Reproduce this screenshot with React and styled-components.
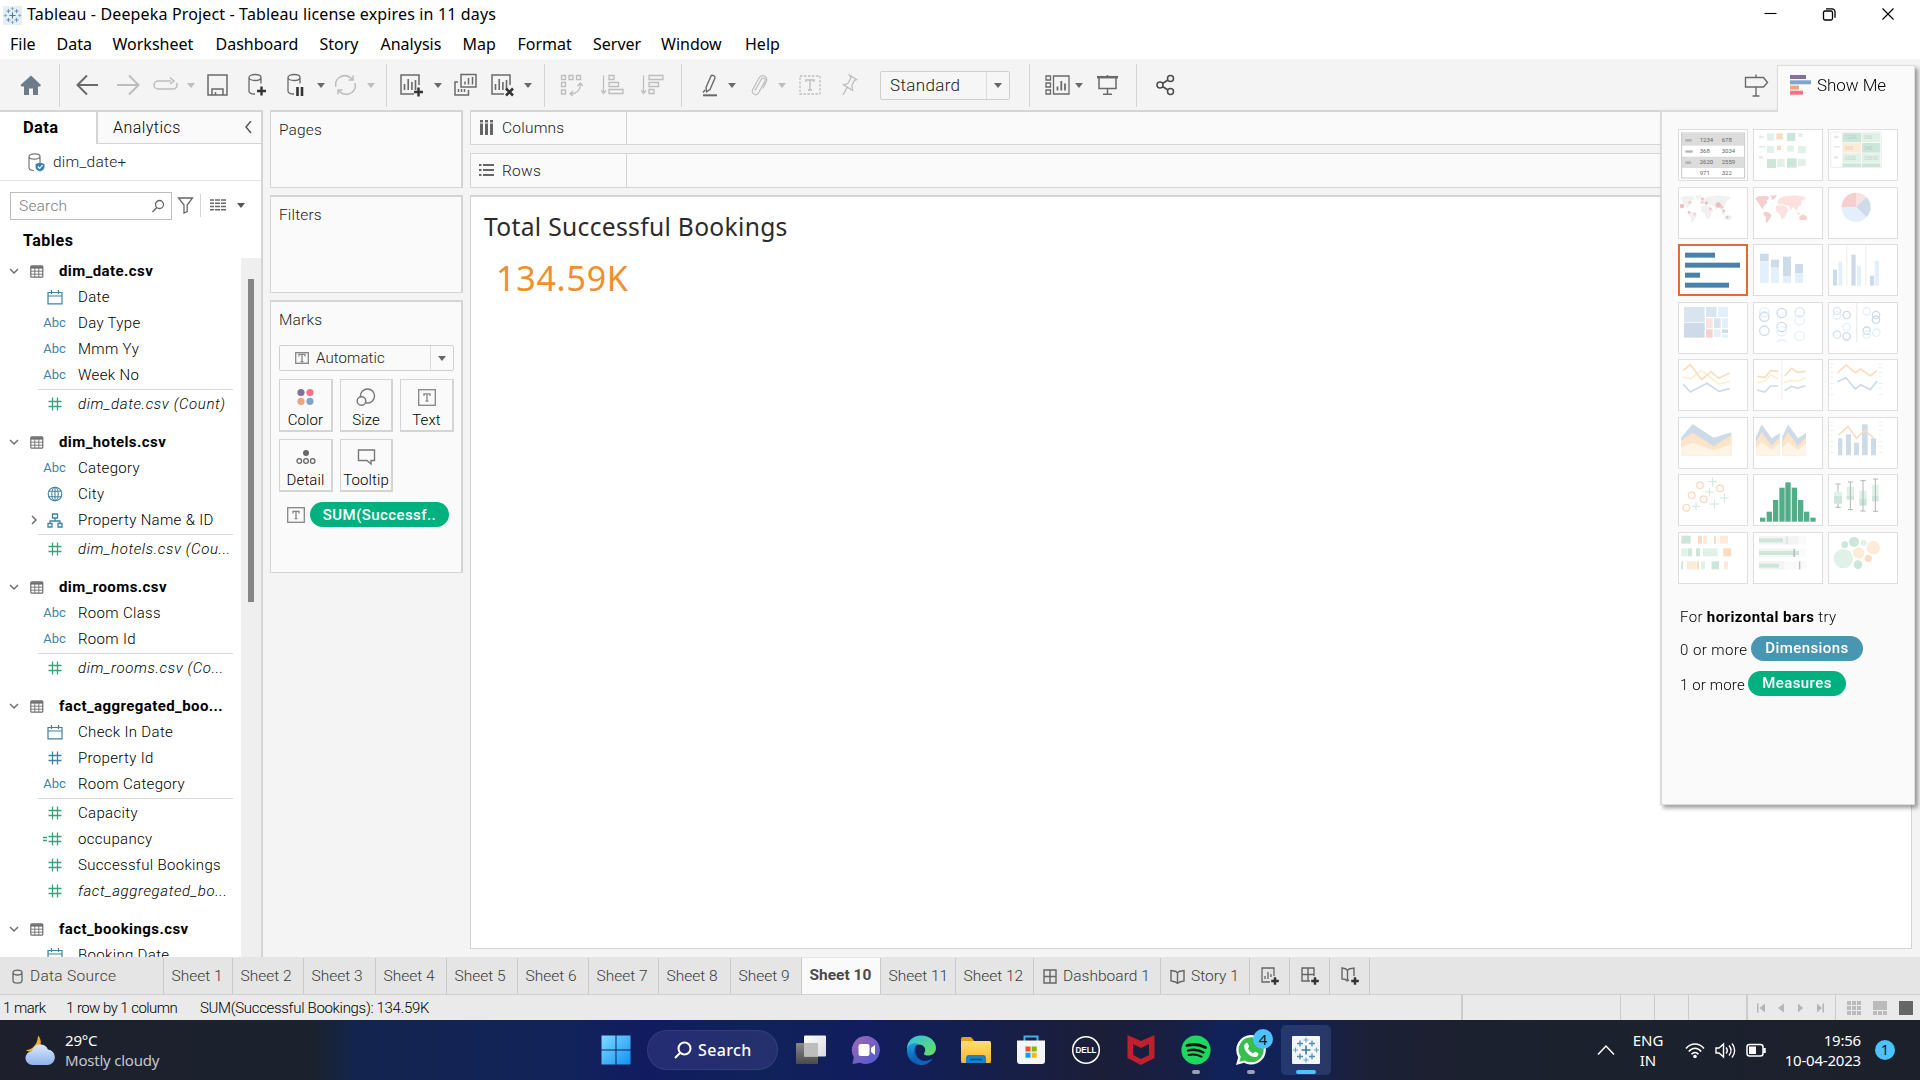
import React from "react";
import styled, { createGlobalStyle } from "styled-components";

const UI = `Roboto, "Liberation Sans", sans-serif`;
const SYS = `"Noto Sans", "Open Sans", sans-serif`;
const LINE = "#d4d4d4";
const BLUE = "#3f83a3";
const GREEN = "#3aa27a";

const Global = createGlobalStyle`
  * { box-sizing: border-box; }
  html, body { margin: 0; padding: 0; }
  body { width: 1920px; height: 1080px; overflow: hidden; font-family: ${UI}; font-weight: 300; color: #111; }
  svg { display: block; flex: none; }
`;

/* ---------- window frame ---------- */
const Window = styled.div`
  position: relative;
  width: 1920px;
  height: 1080px;
  display: flex;
  flex-direction: column;
  background: #f4f4f4;
  overflow: hidden;
`;
const TitleBar = styled.header`
  height: 30px;
  display: flex;
  align-items: center;
  padding: 0 25px 0 3px;
  background: #fff;
  font: 16px/29px ${SYS};
`;
const TitleText = styled.div`
  height: 30px;
  margin-left: 5px;
  flex: 1;
  letter-spacing: 0.15px;
  color: #000;
`;
const WindowControls = styled.div`
  display: flex;
  align-items: center;
  gap: 45px;
`;
const MenuBar = styled.nav`
  height: 29px;
  display: flex;
  padding-left: 10px;
  background: #fff;
  font: 16px/29px ${SYS};
  color: #000;
`;
const MenuItem = styled.div`
  width: ${(p) => p.$w}px;
  white-space: nowrap;
`;

/* ---------- toolbar ---------- */
const Toolbar = styled.div`
  height: 51px;
  flex: none;
  display: flex;
  align-items: flex-start;
  padding-top: 5px;
`;
const Tool = styled.div`
  flex: none;
  width: ${(p) => p.$w}px;
  margin-left: ${(p) => p.$gap}px;
  height: 42px;
  display: flex;
  align-items: center;
  justify-content: center;
  color: ${(p) => (p.$off ? "#bdbdbd" : "#6a6a6a")};
`;
const ToolDivider = styled(Tool)`
  height: 43px;
  background: ${LINE};
`;
const Caret = styled.i`
  display: block;
  width: 0;
  height: 0;
  border-left: 4px solid transparent;
  border-right: 4px solid transparent;
  border-top: 5px solid currentColor;
`;
const FitSelect = styled.div`
  width: 130px;
  height: 29px;
  border: 1.5px solid #cfcfcf;
  border-radius: 2px;
  display: flex;
  align-items: center;
  background: #f6f6f6;
  font-size: 17px;
  color: #222;
  span { flex: 1; padding-left: 9px; letter-spacing: 0.35px; }
`;
const SelectArrow = styled.div`
  width: ${(p) => p.$w}px;
  align-self: stretch;
  border-left: 1px solid #dcdcdc;
  display: flex;
  align-items: center;
  justify-content: center;
  color: #666;
`;

/* ---------- body ---------- */
const Body = styled.div`
  height: 847px;
  flex: none;
  display: flex;
`;
const DataPane = styled.aside`
  width: 263px;
  display: flex;
  flex-direction: column;
  background: #fff;
  border-right: 2px solid ${LINE};
  border-top: 2px solid ${LINE};
  overflow: hidden;
`;
const PaneTabs = styled.div`
  height: 32px;
  flex: none;
  display: flex;
  font-size: 16px;
  line-height: 31px;
`;
const DataTab = styled.div`
  width: 96px;
  padding-left: 23px;
  font-weight: 700;
  font-size: 16.5px;
  letter-spacing: 0.35px;
  color: #000;
`;
const AnalyticsTab = styled.div`
  flex: 1;
  display: flex;
  align-items: center;
  justify-content: space-between;
  padding: 0 9px 0 15px;
  border-left: 2px solid ${LINE};
  border-bottom: 1px solid ${LINE};
  background: #fafafa;
  letter-spacing: 0.45px;
  color: #000;
`;
const SourceRow = styled.div`
  height: 37px;
  flex: none;
  display: flex;
  align-items: center;
  padding-left: 28px;
  border-bottom: 1px solid #e2e2e2;
  font-size: 15.5px;
  letter-spacing: 0.25px;
  color: #222;
  span { margin-left: 8px; }
`;
const SearchRow = styled.div`
  height: 49px;
  flex: none;
  display: flex;
  align-items: center;
  padding-left: 10px;
`;
const SearchBox = styled.div`
  width: 162px;
  height: 28px;
  margin-right: 5px;
  border: 1px solid #bdbdbd;
  display: flex;
  align-items: center;
  justify-content: space-between;
  padding: 0 6px 0 8px;
  font-size: 15.5px;
  letter-spacing: 0.2px;
  color: #7d7d7d;
`;
const SearchSplit = styled.div`
  width: 1px;
  height: 23px;
  margin: 0 9px 0 6px;
  background: ${LINE};
`;
const ListCaret = styled.div`
  margin-left: 10px;
  color: #555;
`;
const TablesTitle = styled.div`
  height: 28px;
  line-height: 21px;
  flex: none;
  padding-left: 23px;
  font-weight: 700;
  font-size: 16px;
  letter-spacing: 0.5px;
  color: #000;
`;
const TreeArea = styled.div`
  flex: 1;
  min-height: 0;
  display: flex;
  overflow: hidden;
`;
const Tree = styled.div`
  width: 241px;
`;
const ScrollTrack = styled.div`
  width: 20px;
  padding: 21px 0 0 7px;
  background: #efefef;
`;
const ScrollThumb = styled.div`
  width: 6px;
  height: 323px;
  background: #858585;
`;
const Group = styled.section`
  margin-bottom: 12px;
`;
const GroupHead = styled.div`
  height: 26px;
  display: flex;
  align-items: center;
  padding-left: 9px;
  font-weight: 700;
  font-size: 15px;
  color: #000;
  span { margin-left: 15px; letter-spacing: 0.42px; }
`;
const GroupIcon = styled.div`
  margin-left: 11px;
`;
const Field = styled.div`
  height: 26px;
  display: flex;
  align-items: center;
  font-size: 15px;
  letter-spacing: ${(p) => (p.$italic ? 0.62 : 0.33)}px;
  color: #000;
  font-style: ${(p) => (p.$italic ? "italic" : "normal")};
`;
const Expander = styled.div`
  width: 39px;
  display: flex;
  justify-content: flex-end;
`;
const FieldIcon = styled.div`
  width: 31px;
  margin-right: 8px;
  display: flex;
  justify-content: center;
  font: 400 13px/26px ${UI};
  letter-spacing: -0.1px;
  color: ${(p) => (p.$green ? GREEN : BLUE)};
`;
const Rule = styled.div`
  height: 1px;
  margin: 1px 8px 1px 38px;
  background: #d9d9d9;
`;

/* ---------- shelves ---------- */
const CardColumn = styled.div`
  width: 193px;
  margin-left: 7px;
  display: flex;
  flex-direction: column;
  gap: 7px;
`;
const Card = styled.section`
  height: ${(p) => p.$h}px;
  padding: 8px 0 0 8px;
  border: 1px solid ${LINE};
  border-width: 2px 2px 1px 1px;
  background: #fafafa;
`;
const CardTitle = styled.div`
  height: ${(p) => p.$h || 20}px;
  line-height: 21px;
  font-size: 15.5px;
  letter-spacing: 0.15px;
  color: #222;
`;
const MarkSelect = styled.div`
  width: 175px;
  height: 26px;
  display: flex;
  align-items: center;
  padding-left: 15px;
  border: 1px solid #cfcfcf;
  border-radius: 2px;
  font-size: 15px;
  letter-spacing: 0.1px;
  color: #222;
  span { flex: 1; margin-left: 7px; }
`;
const MarkGrid = styled.div`
  margin-top: 8px;
  display: grid;
  grid-template-columns: 54px 53px 54px;
  grid-auto-rows: 53px;
  gap: 7px;
`;
const MarkButton = styled.div`
  border: 1px solid ${LINE};
  border-width: 1px 2px 2px 1px;
  display: flex;
  flex-direction: column;
  align-items: center;
  justify-content: flex-end;
  white-space: nowrap;
  font-size: 15px;
  letter-spacing: 0.1px;
  line-height: 18px;
  padding-bottom: 1px;
  color: #000;
  svg { margin-bottom: 5px; }
`;
const PillRow = styled.div`
  margin: 10px 0 0 8px;
  display: flex;
  align-items: center;
  gap: 5px;
`;
const Pill = styled.span`
  width: ${(p) => p.$w}px;
  height: 25px;
  flex: none;
  border-radius: 13px;
  display: inline-flex;
  align-items: center;
  justify-content: center;
  background: ${(p) => p.$bg};
  color: #fff;
  font-size: 15px;
  font-weight: 500;
  letter-spacing: 0.42px;
`;
const Stage = styled.main`
  width: 1442px;
  margin-left: 7px;
  display: flex;
  flex-direction: column;
`;
const Shelf = styled.div`
  height: 35px;
  margin-bottom: ${(p) => p.$mb}px;
  display: flex;
  border: 1px solid ${LINE};
  border-top-width: ${(p) => p.$top}px;
  background: #fafafa;
`;
const ShelfLabel = styled.div`
  width: 156px;
  display: flex;
  align-items: center;
  padding-left: 8px;
  border-right: 1px solid ${LINE};
  font-size: 15.5px;
  letter-spacing: 0.22px;
  color: #222;
  span { margin-left: 8px; }
`;
const Sheet = styled.section`
  height: 754px;
  padding: 14px 0 0 13px;
  border: 1px solid ${LINE};
  border-top-width: 2px;
  background: #fff;
  font-family: ${SYS};
  font-weight: 400;
`;
const SheetTitle = styled.h1`
  margin: 0;
  font-size: 24.6px;
  line-height: 31px;
  font-weight: 400;
  letter-spacing: 0.32px;
  color: #2b2b2b;
`;
const BigNumber = styled.div`
  margin: 14px 0 0 12px;
  font-size: 34px;
  line-height: 44px;
  letter-spacing: 0.75px;
  color: #f28e2b;
`;

/* ---------- show me ---------- */
const ShowMe = styled.aside`
  position: absolute;
  left: 1660px;
  top: 65px;
  width: 255px;
  filter: drop-shadow(3px 3px 2px rgba(0, 0, 0, 0.38));
`;
const ShowMeTab = styled.div`
  height: 47px;
  margin-left: 117px;
  display: flex;
  align-items: center;
  padding: 0 0 8px 12px;
  border: 1px solid #dcdcdc;
  border-bottom: 0;
  background: #fafafa;
  font-size: 17px;
  letter-spacing: -0.05px;
  color: #000;
  span { margin-left: 6px; }
`;
const ShowMeBody = styled.div`
  height: 693px;
  padding: 17px 0 0 16px;
  border: solid #dcdcdc;
  border-width: 0 1px 1px 2px;
  background: #fafafa;
`;
const TopEdge = styled.div`
  width: 117px;
  height: 2px;
  margin-top: -2px;
  background: #dcdcdc;
`;
const TileGrid = styled.div`
  display: grid;
  grid-template-columns: repeat(3, 70px);
  grid-auto-rows: 52px;
  gap: 5.5px 5px;
`;
const Tile = styled.div`
  background: #fff;
  box-shadow: inset 0 0 0 ${(p) => (p.$on ? "2px #df6b35" : "1px #dedede")};
`;
const HintBlock = styled.div`
  margin-top: 20px;
`;
const Hint = styled.div`
  height: ${(p) => p.$h}px;
  margin: ${(p) => p.$mt || 0}px 0 0 2px;
  display: flex;
  align-items: center;
  font-size: 15px;
  letter-spacing: ${(p) => p.$ls ?? 0.35}px;
  color: #000;
  b { font-weight: 700; letter-spacing: 0.42px; }
  ${Pill} { margin-bottom: 4px; }
`;
const HintText = styled.span`
  width: ${(p) => p.$w}px;
  white-space: nowrap;
`;

/* ---------- bottom ---------- */
const SheetTabs = styled.div`
  height: 38px;
  flex: none;
  display: flex;
  border-bottom: 1px solid #cfcfcf;
  background: #e5e5e5;
`;
const SheetTab = styled.div`
  width: ${(p) => p.$w}px;
  height: 36px;
  margin-top: 1px;
  flex: none;
  display: flex;
  align-items: center;
  padding-left: ${(p) => p.$pl || 7.5}px;
  padding-bottom: ${(p) => (p.$on ? 2 : 0)}px;
  border-right: 1px solid #c9c9c9;
  background: ${(p) => (p.$on ? "#fafafa" : "transparent")};
  font-size: 15.5px;
  font-weight: ${(p) => (p.$on ? 700 : 300)};
  letter-spacing: ${(p) => p.$ls ?? 0}px;
  white-space: nowrap;
  color: ${(p) => (p.$on ? "#4a4a4a" : "#3a3a3a")};
  svg { color: #666; }
  span { margin-left: 6px; }
`;
const StatusBar = styled.div`
  height: 25px;
  flex: none;
  display: flex;
  background: #eaeaea;
  font-size: 15px;
  line-height: 26px;
  color: #000;
`;
const StatusText = styled.div`
  width: ${(p) => p.$w}px;
  white-space: nowrap;
  letter-spacing: ${(p) => p.$ls || 0}px;
`;
const StatusCell = styled.div`
  width: ${(p) => p.$w}px;
  display: flex;
  align-items: center;
  border-left: ${(p) => p.$b || 1}px solid #cbcbcb;
`;
const Taskbar = styled.footer`
  height: 60px;
  flex: none;
  display: flex;
  align-items: center;
  color: #fff;
  font-family: ${SYS};
  font-weight: 400;
  background: linear-gradient(90deg, #1d202c 0, #1b222e 310px, #13244e 355px, #12235a 560px, #111c60 650px, #10225a 760px, #111d5e 860px, #141f50 960px, #1c1e38 1100px, #171f44 1180px, #11225a 1220px, #122155 1300px, #1c2038 1360px, #1c2030 1440px, #1b222e 1560px, #1c202b 1920px);
`;
const Weather = styled.div`
  width: 576px;
  padding-left: 25px;
  display: flex;
  align-items: center;
  font-size: 15px;
  line-height: 20px;
  span { display: block; color: #c3c8cf; letter-spacing: -0.22px; }
`;
const WeatherText = styled.div`
  margin-left: 9px;
  letter-spacing: -0.2px;
`;
const StartButton = styled.div`
  width: 56px;
  padding-left: 25px;
`;
const SearchPill = styled.div`
  width: 131px;
  height: 40px;
  margin: 0 8px 0 15px;
  display: flex;
  align-items: center;
  padding: 0 0 0 26px;
  gap: 6px;
  border-radius: 20px;
  border: 1px solid rgba(255, 255, 255, 0.07);
  background: rgba(120, 110, 190, 0.2);
  font-size: 16px;
  font-weight: 500;
  letter-spacing: 0.35px;
`;
const Apps = styled.div`
  display: flex;
  gap: 5px;
`;
const AppSlot = styled.div`
  position: relative;
  width: 50px;
  height: 50px;
  display: flex;
  align-items: center;
  justify-content: center;
  border-radius: 5px;
  background: ${(p) => (p.$on ? "rgba(120,150,220,0.2)" : "transparent")};
  &::after {
    content: "";
    position: absolute;
    left: 50%;
    bottom: 1px;
    height: 4px;
    width: ${(p) => p.$mark || 0}px;
    transform: translateX(-50%);
    border-radius: 2px;
    background: ${(p) => (p.$on ? "#4cc2ff" : "#9ba0b5")};
  }
`;
const Badge = styled.span`
  position: absolute;
  top: 4px;
  right: 3px;
  width: 20px;
  height: 20px;
  border-radius: 50%;
  background: #4cc2ff;
  color: #08111c;
  font-size: 15px;
  line-height: 20px;
  text-align: center;
`;
const Tray = styled.div`
  flex: 1;
  display: flex;
  align-items: center;
  justify-content: flex-end;
  padding-right: 25px;
  font-size: 15px;
  line-height: 20px;
`;
const Lang = styled.div`
  width: 50px;
  margin: 0 12px 0 8px;
  text-align: center;
`;
const TrayIcons = styled.div`
  display: flex;
  gap: 10px;
`;
const Clock = styled.div`
  width: 95px;
  text-align: right;
  letter-spacing: -0.2px;
`;
const Notice = styled.div`
  width: 20px;
  height: 20px;
  margin-left: 14px;
  border-radius: 50%;
  background: #4cc2ff;
  color: #08111c;
  font-size: 14px;
  line-height: 20px;
  text-align: center;
`;

/* ---------- small icons ---------- */
const Svg = ({ w, h, children, vb, ...r }) => (
  <svg width={w} height={h} viewBox={vb || `0 0 ${w} ${h}`} fill="none" stroke="currentColor" strokeWidth="1.5" {...r}>
    {children}
  </svg>
);
const Bars = ({ x = 0, y = 0 }) => <path d={`M${x} ${y}v-6M${x + 3.7} ${y}v-11M${x + 7.4} ${y}v-8M${x + 11} ${y}v-10`} strokeWidth="1.6" />;
const Plus = ({ x, y, s = 3.8 }) => <path d={`M${x - s} ${y}h${2 * s}M${x} ${y - s}v${2 * s}`} stroke="#333" strokeWidth="2.4" />;
const TBox = ({ w = 18, h = 16 }) => (
  <Svg w={w} h={h} stroke="#858585" strokeWidth="1.3">
    <rect x=".7" y=".7" width={w - 1.4} height={h - 1.4} />
    <path d={`M${w / 2 - 3} ${h / 2 - 1.6}v-2h6v2M${w / 2} ${h / 2 - 3.6}v7.2m-1.5 0h3`} />
  </Svg>
);
const Chevron = ({ right }) => (
  <Svg w={10} h={10} stroke="#707070" strokeWidth="1.5">
    <path d={right ? "M3 1l4 4-4 4" : "M1 3l4 4 4-4"} />
  </Svg>
);
const TableIcon = () => (
  <Svg w={14} h={13} stroke="#6e6e6e" strokeWidth="1.2">
    <rect x=".8" y=".8" width="12" height="11.4" rx="1" />
    <path d="M1 2.4h12" strokeWidth="2.4" />
    <path d="M1 6.2h12M1 9.2h12M4.8 3v9M8.8 3v9" strokeWidth=".9" />
  </Svg>
);
const DateIcon = () => (
  <Svg w={16} h={15} strokeWidth="1.2">
    <path d="M1 2.5h14v11.3H1zM1 6h14M4.5 0v4M11.5 0v4" />
  </Svg>
);
const Hash = ({ calc }) => (
  <Svg w={24} h={14} strokeWidth="1.3">
    <path d="M5.500 4.5h13M5.500 9.5h13M9.500 .5v13M14.500 .5v13" />
    {calc && <path d="M0 5.500h4M0 8.500h4" strokeWidth="1.4" />}
  </Svg>
);
const Globe = () => (
  <Svg w={16} h={16} strokeWidth="1.1">
    <circle cx="8" cy="8" r="6.8" />
    <ellipse cx="8" cy="8" rx="3.2" ry="6.8" />
    <path d="M8 1v14M1.5 5.3h13M1.5 10.7h13" />
  </Svg>
);
const Hier = () => (
  <Svg w={16} h={15} strokeWidth="1.3">
    <path d="M5.5 1h5v4h-5zM1 10.5h4V14H1zM11 10.5h4V14h-4zM8 5v3M3 10.5V8h10v2.500" />
  </Svg>
);
const ICONS = {
  date: <DateIcon />, abc: "Abc", hash: <Hash />, calc: <Hash calc />, globe: <Globe />, hier: <Hier />,
};

/* ---------- toolbar drawings ---------- */
const Cyl = ({ x = 2 }) => (
  <path d={`M${x} 4.500v13.500c0 2 2 3 6 3M${x} 4.500c0-4 12-4 12 0s-12 4-12 0M${x + 12} 4.500v6`} strokeWidth="1.3" />
);
const TOOL_ART = {
  home: <path d="M11 2.500L21 12l-1 1.500h-2V22h-5v-6.500H9V22H4v-8.500H1.500L.5 12z" fill="#6b7b8c" stroke="none" />,
  back: <path d="M22 12H2M11 2.500L1.500 12 11 21.500" strokeWidth="2" />,
  fwd: <path d="M1 12h21M13 2.500L22.500 12 13 21.500" strokeWidth="2" />,
  redo: <path d="M18 8H5a4 4 0 000 8h15a4 4 0 003.500-6M17 4.500L21 8l-4 3" />,
  save: <path d="M1 2h19v20H1zM5 22v-6h11v6M8.500 22v-3" />,
  dbplus: <><Cyl /><Plus x={14.500} y={18} s={4.500} /></>,
  dbpause: <><Cyl x={1} /><path d="M10.500 14v9M15 14v9" stroke="#333" strokeWidth="2.600" /></>,
  refresh: <path d="M2 14C0 6 8 0 15.500 4l3 2.500M21 10c2 8-6 14-13.500 10l-3-2.500M14.500 7h4.500V2.500M8.500 17H4v4.500" />,
  newsheet: <><path d="M19 12V2H1v19h13" /><Bars x={4.500} y={17} /><Plus x={18.500} y={19} s={4.500} /></>,
  dup: <><path d="M7 1.500h15v12.500H7zM4 9H1v13h13.500v-5" /><path d="M11 11.500v-3M14.500 11.500V5M18.500 11.500V4M4.500 19v-3M7.500 19v-3M10.500 19v-3" /></>,
  clear: <><path d="M19 12V2H1v19h12" /><Bars x={4.500} y={17} /><path d="M15 15.500l7 7M22 15.500l-7 7" stroke="#333" strokeWidth="2.600" /></>,
  swap: <path d="M1.500 2.500h4v4h-4zM9 2.500h4v4H9zM16.500 2.500h4v4h-4zM1.500 9.500h4v4h-4zM1.500 17h4v4h-4zM20.500 10.500c0 6-3 10-10 10.500M17.500 13l3-3 2.500 3M13 18l-3 3 3 2" strokeWidth="1.300" />,
  sort1: <path d="M2.500 2.500v18M0 17.500l2.500 3 2.500-3M8 2.500h5v4H8zM8 9.500h9.500v4H8zM8 16.500h14v4H8z" strokeWidth="1.300" />,
  sort2: <path d="M2.500 2.500v18M0 17.500l2.500 3 2.500-3M8 2.500h14v4H8zM8 9.500h9.500v4H8zM8 16.500h5v4H8z" strokeWidth="1.300" />,
  pen: <><path d="M4 14.500L9 3c1-1.500 4.500 0 4 2L8 16.500l-3.500 2.200zM1 19.500L3 17" strokeWidth="1.400" /><path d="M1 22.300h14" strokeWidth="2" /></>,
  clip: <path d="M5 17.500L11.500 6c1.500-2 4.500-.5 3.500 2L8.500 20c-2 3.500-7.500 1-6-3L9 5c2.500-4.500 9-2 7.500 3L13 15.500" strokeWidth="1.200" />,
  tbox: <><rect x="1" y="3" width="20" height="18" strokeDasharray="2.500 1.500" strokeWidth="1.300" /><path d="M7 9V7h8v2M11 7v10m-2 0h4" strokeWidth="1.300" /></>,
  pin: <path d="M8.500 2l7 4.500-2 .8-2.500 5 .5 5-9-5.500 4.500-1.500 3-5.300zM6 14.500L2 22" strokeWidth="1.300" />,
  cards: <><path d="M1 3h4.500v4H1zM1 10h4.500v4H1zM1 17h4.500v4H1zM8.500 3H24v18H8.500z" strokeWidth="1.300" /><path d="M12.500 17.500v-4M16.300 17.500V8M20 17.500v-7" strokeWidth="1.800" /></>,
  pres: <><path d="M1 4.200h21" strokeWidth="2.500" /><path d="M3 5v10.500h17V5M11.500 2v2M11.500 15.500V21M7 21.300h9" /></>,
  share: <g stroke="#4a4a4a"><circle cx="4" cy="12" r="3" /><circle cx="14.500" cy="5.500" r="3" /><circle cx="14.500" cy="18.500" r="3" /><path d="M6.500 10.500L12 7M6.500 13.500L12 17" /></g>,
  sign: <path d="M1.500 4.500h18l4 5-4 4.500h-18zM12 1.500v3M12 14v9M8.500 23h7" strokeWidth="1.400" />,
};
const TOOLS = [
  ["home", 20, 22], ["|", 59, 1], ["back", 76, 23], ["fwd", 116, 24, 1], ["redo", 153, 25, 1], ["v", 187, 8, 1],
  ["save", 207, 21], ["dbplus", 247, 20], ["dbpause", 287, 17], ["v", 317, 8], ["refresh", 334, 23, 1], ["v", 367, 8, 1],
  ["|", 386, 1], ["newsheet", 400, 24], ["v", 434, 8], ["dup", 454, 23], ["clear", 491, 23], ["v", 524, 8], ["|", 544, 1],
  ["swap", 560, 23, 1], ["sort1", 601, 23, 1], ["sort2", 641, 23, 1], ["|", 681, 1], ["pen", 702, 16], ["v", 728, 8],
  ["clip", 750, 18, 1], ["v", 778, 8, 1], ["tbox", 799, 22, 1], ["pin", 841, 17, 1], ["select", 880, 130], ["|", 1029, 1],
  ["cards", 1045, 25], ["v", 1075, 8], ["pres", 1096, 23], ["|", 1136, 1], ["share", 1156, 19], ["sign", 1744, 25],
];
const ToolStrip = () => (
  <Toolbar>
    {TOOLS.map(([kind, x, w, off], i) => {
      const gap = i ? x - TOOLS[i - 1][1] - TOOLS[i - 1][2] : x;
      if (kind === "|") return <ToolDivider key={i} $w={w} $gap={gap} />;
      return (
        <Tool key={i} $w={w} $gap={gap} $off={off}>
          {kind === "v" && <Caret />}
          {kind === "select" && <FitSelect><span>Standard</span><SelectArrow $w={23}><Caret /></SelectArrow></FitSelect>}
          {TOOL_ART[kind] && <Svg w={w} h={24}>{TOOL_ART[kind]}</Svg>}
        </Tool>
      );
    })}
  </Toolbar>
);

/* ---------- chart type thumbnails, drawn on a 210 x 156 grid ---------- */
const gl = "#e0f2e7", gm = "#cde6da", ol = "#fdebd8", om = "#fbdcc0", bd = "#cddbe8", bl = "#e3f0fb", bm = "#d8e5f1", pk = "#fde0e0", pd = "#f4cfcd", yl = "#fdf0d2";
const R = ({ d }) => d.map(([x, y, w, h, f], i) => <rect key={i} x={x} y={y} width={w} height={h} fill={f} />);
const C = ({ d }) => d.map(([x, y, r, f], i) => <circle key={i} cx={x} cy={y} r={r} fill={f} />);
const O = ({ d, r }) => d.map(([x, y, c], i) => <circle key={i} cx={x} cy={y} r={r} fill="none" stroke={c} strokeWidth="4" />);
const L = ({ d }) => d.map(([p, c], i) => <polyline key={i} points={p} fill="none" stroke={c} strokeWidth="5" />);
const P = ({ d }) => d.map(([p, c], i) => <polygon key={i} points={p} fill={c} />);
const Cell = ({ x, y, f = "#666", s = 18, children }) => <text x={x} y={y} fill={f} fontSize={s} fontWeight="400" fontFamily="Roboto, sans-serif">{children}</text>;
const World = ({ a, b }) => (
  <g>
    <path fill={a} d="M6 34l10-6 20-1 12 2-2 8-6 4 3 6-8 8-6 8 6 6-6-2-10-14-6-10z M52 26l20-2-6 10-8 6z M34 74l12 2 10 8-4 10-10 14-4-4 1-12-8-10z M138 90l10-8 12 6 2 8-8 4-14-2z" />
    <path fill={b} d="M74 42l8-10 14-4 30-3 30 4 2 6-12 6-2 12-8 6-6 12-6-8-6-2-4 10-6-14-10-2-12-4-10 2z M68 58l14-4 16 4 8 10-6 12-6 14-8 2-6-16-10-6z M128 74l10 4 6 4-8 2z" />
  </g>
);
const ticks = (x) => [19, 29, 45, 58, 77, 92, 111].map((y, i) => [x, y - 5, i % 2 ? 8 : 11, 2, "#e6e6e6"]);
const TILES = [
  <>
    <rect x="11" y="12" width="189" height="135" fill="#fff" stroke="#c6c6c6" strokeWidth="3" />
    <R d={[[12, 13, 187, 37, "#dcdcdc"], [12, 83, 187, 34, "#dcdcdc"], [22, 30, 19, 8, "#b5b5b5"], [22, 64, 22, 7, "#b5b5b5"], [22, 97, 17, 8, "#b5b5b5"]]} />
    <Cell x={65} y={39}>1234</Cell><Cell x={131} y={39}>678</Cell><Cell x={65} y={73}>368</Cell><Cell x={131} y={73}>3034</Cell>
    <Cell x={65} y={106}>2620</Cell><Cell x={131} y={106}>2559</Cell><Cell x={65} y={137}>971</Cell><Cell x={131} y={137}>322</Cell>
  </>,
  <R d={[[18, 20, 14, 8, "#e9e9e9"], [18, 51, 19, 5, "#e9e9e9"], [18, 81, 12, 8, "#e9e9e9"], [42, 13, 21, 22, gl], [70, 13, 20, 18, om], [102, 12, 25, 24, gm], [136, 12, 12, 12, gl], [42, 51, 21, 21, gl], [72, 50, 12, 13, om], [103, 50, 19, 18, gl], [135, 51, 23, 22, gl], [42, 90, 27, 27, gm], [72, 90, 23, 24, gl], [102, 88, 29, 28, gm], [135, 90, 23, 21, gl]]} />,
  <>
    <rect x="8" y="9" width="152" height="106" fill="#fff" stroke="#eee" strokeWidth="3" />
    <R d={[[18, 20, 14, 8, "#e9e9e9"], [18, 51, 19, 5, "#e9e9e9"], [18, 81, 12, 8, "#e9e9e9"], [43, 12, 57, 28, gm], [102, 12, 55, 28, gl], [43, 42, 57, 29, ol], [102, 42, 55, 29, gm], [43, 73, 57, 28, gl], [102, 73, 55, 28, gl], [43, 103, 57, 11, gm], [102, 103, 55, 11, gm]]} />
    <Cell x={50} y={31} f="#b9cfc3" s={15}>1234</Cell><Cell x={108} y={31} f="#bcd4c7" s={15}>545</Cell><Cell x={50} y={62} f="#e2cdb9" s={15}>368</Cell>
    <Cell x={108} y={62} f="#b4ccbf" s={15}>340</Cell><Cell x={50} y={92} f="#bcd4c7" s={15}>2620</Cell><Cell x={108} y={92} f="#bcd4c7" s={15}>33890</Cell>
  </>,
  <><World a="#f1f1f1" b="#f1f1f1" /><C d={[[12, 57, 7, "#e9bfc4"], [35, 46, 5, "#f6cfcf"], [73, 36, 5, "#f2c6c8"], [85, 48, 5, "#e9bfc4"], [72, 46, 5, "#f8d5d5"], [121, 54, 8, "#e9bfc4"], [132, 60, 5, "#f2c6c8"], [137, 72, 5, "#f2c6c8"], [97, 66, 4, "#f2c6c8"], [33, 76, 4, "#e9bfc4"], [50, 81, 5, "#f8d5d5"], [148, 91, 4, "#e9bfc4"]]} /></>,
  <World a={pd} b={pk} />,
  <>
    <path d="M84 60V17A43 43 0 0041 62z" fill={pd} /><path d="M84 60V17A43 43 0 01115 30z" fill={pk} />
    <path d="M84 60L115 30A43 43 0 01115 91z" fill={bd} /><path d="M84 60L115 91A43 43 0 0141 62z" fill={bl} />
  </>,
  <R d={[[21, 26, 90, 15, "#4a81ab"], [21, 56, 165, 15, "#4a81ab"], [21, 86, 45, 15, "#4a81ab"], [21, 116, 132, 15, "#4a81ab"]]} />,
  <R d={[[21, 29, 26, 23, bd], [21, 52, 26, 65, bl], [54, 47, 24, 24, bd], [54, 71, 24, 46, bl], [90, 38, 24, 59, bd], [90, 97, 24, 20, bl], [126, 60, 24, 28, bd], [126, 88, 24, 29, bl]]} />,
  <R d={[[15, 77, 12, 48, bd], [31, 53, 12, 72, bl], [55, 4, 3, 120, "#ededed"], [70, 32, 13, 93, bd], [87, 66, 12, 59, bl], [112, 4, 3, 120, "#ededed"], [126, 95, 12, 30, bd], [140, 50, 13, 75, bl]]} />,
  <R d={[[18, 15, 62, 45, bm], [18, 62, 62, 45, bd], [84, 15, 32, 30, bm], [120, 15, 30, 30, bl], [84, 49, 20, 29, pk], [108, 49, 20, 29, bm], [132, 49, 18, 29, bl], [84, 82, 20, 25, pd], [108, 82, 20, 23, bl], [132, 82, 18, 11, bd], [132, 97, 18, 10, bl]]} />,
  <><O r={14} d={[[34, 31, bl], [34, 44, bd], [34, 86, bd], [86, 33, bd], [86, 75, bd], [86, 88, bl], [140, 31, bm], [140, 55, bl], [140, 102, bl]]} /><path d="M73 122a14 12 0 0127 0" fill="none" stroke={bl} strokeWidth="4" /></>,
  <><O r={11} d={[[27, 27, bm], [27, 40, bl], [56, 39, bd], [56, 75, bl], [27, 98, bm], [56, 103, bd], [116, 28, bl], [144, 39, bd], [144, 53, bd], [116, 86, bd], [116, 98, bl], [145, 92, bl]]} /><R d={[[85, 2, 3, 120, "#e6e6e6"]]} /></>,
  <L d={[["16,54 38,60 70,34 122,75 155,67", yl], ["16,34 37,17 71,62 99,38 122,58 155,42", om], ["16,76 37,99 87,73 123,97 155,89", bd]]} />,
  <><R d={[[85, 4, 3, 120, "#ececec"]]} /><L d={[["12,71 35,67 53,47 75,60", yl], ["12,52 35,56 53,35 75,37", om], ["12,93 35,99 53,81 75,81", bd], ["93,71 116,64 135,67 157,56", yl], ["95,51 116,28 133,40 157,37", om], ["95,95 115,82 133,88 157,80", bd]]} /></>,
  <><R d={[...ticks(6), ...ticks(152)]} /><L d={[["28,42 54,18 82,41 98,30 127,51 147,34", om], ["28,68 54,56 82,90 98,77 127,92 147,66", bd]]} /></>,
  <P d={[["9,62 44,21 107,62 160,46 160,115 9,115", bd], ["9,71 44,47 107,88 160,55 160,115 9,115", "#fde4c8"], ["9,90 44,77 107,100 160,83 160,115 9,115", "#fef4e6"]]} />,
  <P d={[0, 79].flatMap((o) => [[`${9 + o},60 ${26 + o},22 ${56 + o},64 ${80 + o},48 ${80 + o},115 ${9 + o},115`, bd], [`${9 + o},75 ${26 + o},46 ${56 + o},87 ${80 + o},59 ${80 + o},115 ${9 + o},115`, "#fde4c8"], [`${9 + o},92 ${26 + o},76 ${56 + o},98 ${80 + o},78 ${80 + o},115 ${9 + o},115`, "#fef4e6"]])} />,
  <><R d={[...ticks(6), ...ticks(152), [30, 64, 13, 51, bd], [54, 52, 15, 63, bd], [78, 77, 15, 38, bd], [102, 22, 17, 93, bd], [129, 64, 15, 51, bd]]} /><L d={[["32,54 60,28 85,64 110,40 136,62", om]]} /></>,
  <><O r={10} d={[[66, 34, om], [41, 64, om], [77, 76, om], [126, 43, om], [25, 101, om]]} /><path d="M91 23h26M104 10v28M81 54h26M94 41v26M95 90h28M109 77v27M126 72h26M139 59v28M42 97h24M54 85v24" stroke={gm} strokeWidth="3" /></>,
  <R d={[[21, 131], [41, 113], [60, 78], [79, 41], [97, 25], [116, 41], [135, 78], [153, 113], [172, 131]].map(([x, y]) => [x, y, 16, 143 - y, "#54ad89"])} />,
  <>
    <R d={[[18, 53, 24, 12, gl], [18, 65, 24, 24, gm], [56, 38, 22, 27, gl], [56, 65, 22, 12, gm], [94, 50, 22, 24, gl], [94, 74, 22, 21, gm], [132, 32, 20, 33, gl], [132, 65, 20, 17, gm]]} />
    <path d="M30 30v23M30 89v11M22 30h16M22 100h16M67 24v83M60 24h15M60 107h15M105 20v91M97 20h16M97 111h16M142 15v97M135 15h15M135 112h15" stroke="#b5b5b5" strokeWidth="3" />
  </>,
  <R d={[[10, 11, 28, gm], [60, 11, 12, om], [75, 11, 13, ol], [108, 11, 6, om], [126, 11, 24, ol], [10, 49, 19, gl], [30, 49, 12, gm], [54, 49, 12, gm], [75, 49, 44, gl], [136, 49, 24, om], [10, 88, 5, gm], [27, 88, 27, ol], [56, 88, 7, om], [69, 88, 12, gl], [101, 88, 22, gm], [138, 88, 12, ol]].map(([x, y, w, f]) => [x, y, w, 24, f])} />,
  <R d={[[18, 13, 142, 24, "#fafafa"], [18, 50, 142, 24, "#fafafa"], [18, 88, 142, 24, "#fafafa"], [18, 13, 118, 24, "#f4f4f4"], [18, 50, 118, 24, "#f4f4f4"], [18, 88, 75, 24, "#f4f4f4"], [18, 19, 72, 12, gm], [18, 57, 120, 12, gm], [18, 95, 60, 12, gm], [98, 13, 7, 24, "#e6e6e6"], [121, 51, 5, 24, "#bdbdbd"], [138, 88, 4, 24, "#bdbdbd"]]} />,
  <C d={[[46, 80, 29, gl], [78, 30, 15, gm], [50, 38, 10, gm], [107, 33, 9, gl], [136, 47, 20, ol], [92, 63, 17, ol], [121, 79, 11, om], [90, 98, 13, gm]]} />,
];

/* ---------- data ---------- */
const MENUS = [["File", 46.5], ["Data", 56], ["Worksheet", 103], ["Dashboard", 104], ["Story", 61], ["Analysis", 82], ["Map", 55], ["Format", 75.5], ["Server", 68], ["Window", 84], ["Help", 60]];
const TREE = [
  { name: "dim_date.csv", items: [["date", "Date"], ["abc", "Day Type"], ["abc", "Mmm Yy"], ["abc", "Week No"]], measures: [["hash", "dim_date.csv (Count)", 1]] },
  { name: "dim_hotels.csv", items: [["abc", "Category"], ["globe", "City"], ["hier", "Property Name & ID"]], measures: [["hash", "dim_hotels.csv (Cou...", 1]] },
  { name: "dim_rooms.csv", items: [["abc", "Room Class"], ["abc", "Room Id"]], measures: [["hash", "dim_rooms.csv (Co...", 1]] },
  { name: "fact_aggregated_boo...", items: [["date", "Check In Date"], ["hash", "Property Id"], ["abc", "Room Category"]], measures: [["hash", "Capacity"], ["calc", "occupancy"], ["hash", "Successful Bookings"], ["hash", "fact_aggregated_bo...", 1]] },
  { name: "fact_bookings.csv", items: [["date", "Booking Date"]], measures: [] },
];
const FieldRow = ({ icon, text, italic, green }) => (
  <Field $italic={italic}>
    <Expander>{icon === "hier" && <Chevron right />}</Expander>
    <FieldIcon $green={green}>{ICONS[icon]}</FieldIcon>
    {text}
  </Field>
);
const DashIcon = () => <Svg w={14} h={15} strokeWidth="1.4"><path d="M1 1h12v13H1zM7 1v13M1 7.500h12" /></Svg>;
const BookIcon = () => <Svg w={15} h={15} strokeWidth="1.4"><path d="M1 1.500l5 1 1.500 1.500L9 2.500l5-1V12l-4.500 1-2 1.500-2-1.500L1 12zM7.500 4v10" /></Svg>;
const TABS = [
  ["Sheet 1", 69], ["Sheet 2", 71], ["Sheet 3", 72], ["Sheet 4", 71], ["Sheet 5", 71], ["Sheet 6", 71], ["Sheet 7", 70],
  ["Sheet 8", 72], ["Sheet 9", 71], ["Sheet 10", 79], ["Sheet 11", 75], ["Sheet 12", 78],
];

/* ---------- taskbar drawings ---------- */
const TableauMark = ({ s, plate }) => (
  <svg width={s} height={s} viewBox="0 0 28 28" fill="none">
    <rect width="28" height="28" rx="1" fill={plate} />
    <path d="M14 9.500v9M9.500 14h9" stroke="#3c7aa5" strokeWidth="1.600" />
    <path d="M8 4.500v6M5 7.500h6M20 4.500v6M17 7.500h6M8 17.500v6M5 20.500h6M20 17.500v6M17 20.500h6" stroke="#4f8db5" strokeWidth="1.300" />
    <path d="M14 1.500v5M11.500 4h5M14 21.500v5M11.500 24h5M3.500 11.500v5M1 14h5M24.500 11.500v5M22 14h5" stroke="#6ba3c4" strokeWidth="1.100" />
  </svg>
);
const Bare = ({ children, s = 30 }) => <svg width={s} height={s} viewBox="0 0 30 30">{children}</svg>;
const Grad = ({ id, a, b, v }) => (
  <linearGradient id={id} x1="0" y1="0" x2={v ? 0 : 1} y2="1"><stop stopColor={a} /><stop offset="1" stopColor={b} /></linearGradient>
);
const TaskApps = () => (
  <Apps>
    <AppSlot><Bare><defs><Grad id="tv" a="#fff" b="#d8dadd" /><Grad id="tg" a="#8a8a8a" b="#4a4a4a" v /></defs><rect y="8" width="22" height="21" rx="1" fill="url(#tg)" /><rect x="8" y=".5" width="22" height="21" rx="1" fill="url(#tv)" /><rect x="8" y="8" width="14" height="13.500" fill="#bdbdbd" /></Bare></AppSlot>
    <AppSlot><Bare><defs><Grad id="ch" a="#a06bb0" b="#4b57d2" /></defs><path d="M15 1a14 14 0 11-6 26.700L1.500 29l1.300-7A14 14 0 0115 1z" fill="url(#ch)" /><rect x="7.500" y="9" width="11" height="12" rx="2" fill="#fff" /><path d="M20 13l4-3v10l-4-3z" fill="#fff" /></Bare></AppSlot>
    <AppSlot><Bare><defs><Grad id="e1" a="#2fc1e8" b="#6be05a" /><Grad id="e2" a="#1a9de0" b="#0c4fa8" v /></defs><path d="M1 14C1 6 7 .5 15 .5c9 0 15 6 15 12.500 0 5-4 7.500-8 7.500-4 0-4.500-1.500-3.500-3 2-3 0-8-6-8C7 9.500 1.500 13 1 14z" fill="url(#e1)" /><path d="M1 13.500C2.500 9 8 7.500 12 8.500c-5 3-5.500 14 3 17 4 1.300 8 .5 11.500-2C24 27.500 20 30 15 30 6 30 0 22 1 13.500z" fill="url(#e2)" /><path d="M12 8.700c-3.500 3-4 11 1.500 15.500 4 3.200 9.500 1.500 13-.7C24 27.500 20 30 15 30 7 28 5 13 12 8.700z" fill="#0f63b8" /></Bare></AppSlot>
    <AppSlot><Bare><defs><Grad id="fo" a="#ffdf70" b="#f7b62c" v /></defs><path d="M0 4a2 2 0 012-2h8l3 3.500V10H0z" fill="#e8a211" /><rect y="6" width="30" height="22" rx="1.500" fill="url(#fo)" /><path d="M5 28v-5a3 3 0 013-3h14a3 3 0 013 3v5z" fill="#1b7fd0" /><path d="M9 24.500h12" stroke="#0c4c8a" strokeWidth="1.500" /></Bare></AppSlot>
    <AppSlot><Bare><path d="M8.500 7V1.500h13V7" fill="none" stroke="#35b5f0" strokeWidth="2" /><path d="M1 5.500h28V26a3 3 0 01-3 3H4a3 3 0 01-3-3z" fill="#f4f5f7" /><path d="M9.500 11.500h5v5h-5z" fill="#f25022" /><path d="M15.700 11.500h5v5h-5z" fill="#7fba00" /><path d="M9.500 17.700h5v5h-5z" fill="#00a4ef" /><path d="M15.700 17.700h5v5h-5z" fill="#ffb900" /></Bare></AppSlot>
    <AppSlot><Bare><circle cx="15" cy="15" r="13.300" fill="none" stroke="#fff" strokeWidth="1.500" /><text x="15" y="18.300" textAnchor="middle" fontFamily="Liberation Sans, sans-serif" fontWeight="700" fontSize="8.500" textLength="21" lengthAdjust="spacingAndGlyphs" fill="#fff">DELL</text></Bare></AppSlot>
    <AppSlot><Bare><path d="M1.500 0L15 6 28.500 0v23L15 30 1.500 23zM7 9v11l8 4 8-4V9l-8 4z" fill="#c01f2e" fillRule="evenodd" /></Bare></AppSlot>
    <AppSlot $mark={8}><Bare><circle cx="15" cy="15" r="14.600" fill="#1ed760" /><path d="M6 10.500c6-1.700 13-1 18.500 2" stroke="#111" strokeWidth="2.800" fill="none" strokeLinecap="round" /><path d="M7 15.500c5-1.300 11-.7 15.500 2" stroke="#111" strokeWidth="2.300" fill="none" strokeLinecap="round" /><path d="M7.500 20c4.500-1 9-.5 13 1.700" stroke="#111" strokeWidth="1.900" fill="none" strokeLinecap="round" /></Bare></AppSlot>
    <AppSlot $mark={8}><Bare><path d="M15 0a14.800 14.800 0 11-7 27.800L0 30l2.200-7.800A14.800 14.800 0 0115 0z" fill="#fff" /><path d="M15 2.300a12.500 12.500 0 11-6.300 23.200L3.400 26.800l1.400-5A12.500 12.500 0 0115 2.300z" fill="#35c04e" /><path d="M9.500 8.500c1-1 2-.8 2.500.2l1 2.600c.3.800-1.200 1.800-1 2.300 1 2.200 2.700 3.800 5 4.700.7.200 1.500-1.800 2.300-1.500l2.700 1.300c1 .5.300 2.600-.8 3.300-5 3-14.200-5.400-12.900-11 .2-.8.600-1.400 1.200-1.900z" fill="#fff" /></Bare><Badge>4</Badge></AppSlot>
    <AppSlot $on $mark={20}><TableauMark s={28} plate="#f3f6f8" /></AppSlot>
  </Apps>
);

export default function App() {
  return (
    <Window>
      <Global />
      <TitleBar>
        <TableauMark s={19} plate="#e6eef3" />
        <TitleText>Tableau - Deepeka Project - Tableau license expires in 11 days</TitleText>
        <WindowControls>
          <Svg w={14} h={14} stroke="#000" strokeWidth="1.1"><path d="M1.500 5.500h12" /></Svg>
          <Svg w={14} h={14} stroke="#000" strokeWidth="1.3"><rect x="1.500" y="3" width="9" height="9" rx="1.500" /><path d="M4 .8h6a3 3 0 013 3v6" /></Svg>
          <Svg w={14} h={14} stroke="#000" strokeWidth="1.2"><path d="M1.500 .5l11 11M12.500 .5l-11 11" /></Svg>
        </WindowControls>
      </TitleBar>
      <MenuBar>{MENUS.map(([t, w]) => <MenuItem key={t} $w={w}>{t}</MenuItem>)}</MenuBar>
      <ToolStrip />

      <Body>
        <DataPane>
          <PaneTabs>
            <DataTab>Data</DataTab>
            <AnalyticsTab>Analytics<Svg w={8} h={14} stroke="#555"><path d="M7 0L2 6l5 6" /></Svg></AnalyticsTab>
          </PaneTabs>
          <SourceRow>
            <Svg w={17} h={19} stroke="#777" strokeWidth="1.2">
              <path d="M1 3.500v11c0 2 2 3 5 3M1 3.500c0-3.500 11-3.500 11 0s-11 3.500-11 0M12 3.500v6" />
              <path d="M12 9.500l4.500 1.500v3c0 2-2 3.500-4.500 4.500-2.500-1-4.500-2.500-4.500-4.500v-3z" fill="#3b83a6" stroke="none" />
              <path d="M9.800 13.500l1.800 1.800 3-3.200" stroke="#fff" />
            </Svg>
            <span>dim_date+</span>
          </SourceRow>
          <SearchRow>
            <SearchBox>Search<Svg w={14} h={14} stroke="#666" strokeWidth="1.3"><circle cx="8.500" cy="5.500" r="4" /><path d="M5.700 8.500L1.500 13" /></Svg></SearchBox>
            <Svg w={17} h={17} stroke="#666" strokeWidth="1.3"><path d="M1.500 1h14l-5.300 7v6.500L7 16V8z" /></Svg>
            <SearchSplit />
            <Svg w={17} h={13} stroke="#6a6a6a" strokeWidth="1.600"><path d="M0 1h4M5 1h5M11 1h5M0 4.200h4M5 4.200h5M11 4.200h5M0 7.500h4M5 7.500h5M11 7.500h5M0 10.800h4M5 10.800h5M11 10.800h5" /></Svg>
            <ListCaret><Caret /></ListCaret>
          </SearchRow>
          <TablesTitle>Tables</TablesTitle>
          <TreeArea>
            <Tree>
              {TREE.map((g) => (
                <Group key={g.name}>
                  <GroupHead><Chevron /><GroupIcon><TableIcon /></GroupIcon><span>{g.name}</span></GroupHead>
                  {g.items.map(([i, t]) => <FieldRow key={t} icon={i} text={t} />)}
                  {g.measures.length > 0 && <Rule />}
                  {g.measures.map(([i, t, it]) => <FieldRow key={t} icon={i} text={t} italic={it} green />)}
                </Group>
              ))}
            </Tree>
            <ScrollTrack><ScrollThumb /></ScrollTrack>
          </TreeArea>
        </DataPane>

        <CardColumn>
          <Card $h={78}><CardTitle>Pages</CardTitle></Card>
          <Card $h={98}><CardTitle>Filters</CardTitle></Card>
          <Card $h={273}>
            <CardTitle $h={35}>Marks</CardTitle>
            <MarkSelect><TBox w={14} h={12} /><span>Automatic</span><SelectArrow $w={23}><Caret /></SelectArrow></MarkSelect>
            <MarkGrid>
              <MarkButton>
                <Svg w={18} h={18} stroke="none"><circle cx="4" cy="4.500" r="3.600" fill="#85709b" /><circle cx="13" cy="4.500" r="3.600" fill="#f96f81" /><circle cx="4" cy="13.300" r="3.600" fill="#f2a37a" /><circle cx="13" cy="13.300" r="3.600" fill="#7fa5cb" /></Svg>
                Color
              </MarkButton>
              <MarkButton>
                <Svg w={20} h={18} stroke="#777" strokeWidth="1.4"><circle cx="11.500" cy="8" r="7" /><circle cx="5.500" cy="13" r="4.300" fill="#fafafa" /></Svg>
                Size
              </MarkButton>
              <MarkButton><TBox w={18} h={17} />Text</MarkButton>
              <MarkButton>
                <Svg w={20} h={17} stroke="#666" strokeWidth="1.3"><circle cx="10" cy="4" r="3" fill="#666" stroke="none" /><circle cx="3.300" cy="12" r="2.300" /><circle cx="10" cy="12" r="2.300" /><circle cx="16.700" cy="12" r="2.300" /></Svg>
                Detail
              </MarkButton>
              <MarkButton>
                <Svg w={19} h={17} stroke="#777" strokeWidth="1.400"><path d="M1.500 1h16v10.500H14V15l-4-3.500H1.500z" /></Svg>
                Tooltip
              </MarkButton>
            </MarkGrid>
            <PillRow><TBox w={18} h={16} /><Pill $w={139} $bg="#00b180">SUM(Successf..</Pill></PillRow>
          </Card>
        </CardColumn>

        <Stage>
          <Shelf $mb={8} $top={2}>
            <ShelfLabel><Svg w={15} h={16} strokeWidth="3" stroke="#666"><path d="M2.500 0v2.500M7.500 0v2.500M12.500 0v2.500M2.500 3.500V15M7.500 3.500V15M12.500 3.500V15" /></Svg><span>Columns</span></ShelfLabel>
          </Shelf>
          <Shelf $mb={7} $top={1}>
            <ShelfLabel><Svg w={15} h={14} strokeWidth="1.800" stroke="#666"><path d="M0 1h2.500M4 1h11M0 6h2.500M4 6h11M0 11h2.500M4 11h11" /></Svg><span>Rows</span></ShelfLabel>
          </Shelf>
          <Sheet>
            <SheetTitle>Total Successful Bookings</SheetTitle>
            <BigNumber>134.59K</BigNumber>
          </Sheet>
        </Stage>
      </Body>

      <SheetTabs>
        <SheetTab $w={164} $pl={12} $ls={0.3}><Svg w={12} h={15} strokeWidth="1.3"><path d="M1 3.500v8c0 3.500 9 3.500 9 0v-8M1 3.500c0-3.300 9-3.300 9 0s-9 3.300-9 0" /></Svg><span>Data Source</span></SheetTab>
        {TABS.map(([t, w]) => <SheetTab key={t} $w={w} $on={t === "Sheet 10"}>{t}</SheetTab>)}
        <SheetTab $w={127} $pl={9} $ls={0.03}><DashIcon /><span>Dashboard 1</span></SheetTab>
        <SheetTab $w={89} $pl={9}><BookIcon /><span>Story 1</span></SheetTab>
        <SheetTab $w={40} $pl={11}><Svg w={20} h={20} strokeWidth="1.300"><path d="M13 10V2H1v14h8M4 13v-3M7 13V6M10 11V8" /><Plus x={14} y={15} /></Svg></SheetTab>
        <SheetTab $w={40} $pl={10}><Svg w={20} h={20} strokeWidth="1.400"><path d="M14 10V2H2v13h8M8 2v13M2 8.500h12" /><Plus x={15} y={15} /></Svg></SheetTab>
        <SheetTab $w={40} $pl={10}><Svg w={20} h={20} strokeWidth="1.400"><path d="M9 14l-2 1-1.500-1.500L2 13V2l4 1 1.500 1.500L9 3l5-1v8M7.500 4v11" /><Plus x={15} y={15} /></Svg></SheetTab>
      </SheetTabs>

      <StatusBar>
        <StatusText $w={3} />
        <StatusText $w={63} $ls={-0.5}>1 mark</StatusText>
        <StatusText $w={134} $ls={-0.55}>1 row by 1 column</StatusText>
        <StatusText $w={1261} $ls={-0.32}>SUM(Successful Bookings): 134.59K</StatusText>
        <StatusCell $w={159} $b={2} />
        <StatusCell $w={34} /><StatusCell $w={34} /><StatusCell $w={58} />
        <StatusCell $w={89} $b={2}>
          <Svg w={80} h={10} stroke="none" fill="#b5b5b5"><path d="M9 .5h1.500v9H9zM17 .5v9L11.500 5zM36 .5v9L30 5zM50 .5v9L55 5zM69 .5v9L74 5zM74.500 .5H76v9h-1.500z" /></Svg>
        </StatusCell>
        <StatusCell $w={85}>
          <Svg w={78} h={14} stroke="none" fill="#bbb">
            <path d="M11 0h4v4h-4zM16 0h4v4h-4zM21 0h4v4h-4zM11 5h4v4h-4zM16 5h4v4h-4zM21 5h4v4h-4zM11 10h4v4h-4zM16 10h4v4h-4zM21 10h4v4h-4zM37 0h14v9H37zM37 10h4v4h-4zM42 10h4v4h-4zM47 10h4v4h-4z" />
            <path d="M63 0h14v14H63z" fill="#666" />
          </Svg>
        </StatusCell>
      </StatusBar>

      <Taskbar>
        <Weather>
          <svg width="31" height="31" viewBox="0 0 31 31">
            <defs><Grad id="cl" a="#dbe8fb" b="#8eb2ee" v /></defs>
            <path d="M13 .5c5 5 4 16-8 16-1.500 0-3-.5-4-1.500C8 15 13 8 13 .5z" fill="#f3a92b" />
            <path d="M8 30a7 7 0 01-1-14 8.500 8.500 0 0116-1.500A7.800 7.800 0 0123 30z" fill="url(#cl)" />
          </svg>
          <WeatherText>29°C<span>Mostly cloudy</span></WeatherText>
        </Weather>
        <StartButton>
          <Bare><defs><Grad id="wn" a="#7fdcff" b="#1191f2" /></defs><path d="M.5.500h14v14H.5zM15.500.500h14v14h-14zM.5 15.500h14v14H.5zM15.500 15.500h14v14h-14z" fill="url(#wn)" /></Bare>
        </StartButton>
        <SearchPill>
          <Svg w={18} h={18} stroke="#fff" strokeWidth="2"><circle cx="10.500" cy="7.500" r="6" /><path d="M6 12l-5 5" /></Svg>
          Search
        </SearchPill>
        <TaskApps />
        <Tray>
          <Svg w={18} h={12} stroke="#fff"><path d="M1 10.500L9 2l8 8.500" /></Svg>
          <Lang>ENG<br />IN</Lang>
          <TrayIcons>
            <Svg w={20} h={17} stroke="#fff" strokeWidth="1.600"><path d="M1 6.500c5-6 13-6 18 0M3.800 9.500c3.500-4.300 9-4.300 12.400 0M6.500 12.300c2-2.400 5-2.400 7 0" /><circle cx="10" cy="14.500" r="1.800" fill="#fff" stroke="none" /></Svg>
            <Svg w={21} h={17} stroke="#fff" strokeWidth="1.400"><path d="M1 6h3l4.500-4v13L4 11H1zM11 5.500c1.500 1.700 1.500 4.300 0 6M14 3.500c2.500 3 2.500 7 0 10M17 1.500c3.500 4 3.500 10 0 14" /></Svg>
            <Svg w={20} h={17} stroke="#fff" strokeWidth="1.500"><rect x="1" y="2.500" width="16" height="11.500" rx="2.500" /><path d="M18.500 6v5" strokeWidth="2.500" /><rect x="3" y="4.500" width="7" height="7.500" fill="#fff" stroke="none" /></Svg>
          </TrayIcons>
          <Clock>19:56<br />10-04-2023</Clock>
          <Notice>1</Notice>
        </Tray>
      </Taskbar>

      <ShowMe>
        <ShowMeTab>
          <Svg w={21} h={20} stroke="none"><path d="M0 0h16v4H0z" fill="#85709b" /><path d="M0 5.300h21v4H0z" fill="#7fa5cb" /><path d="M0 10.600h9v4H0z" fill="#f2a37a" /><path d="M0 15.700h13v4H0z" fill="#f96f81" /></Svg>
          <span>Show Me</span>
        </ShowMeTab>
        <TopEdge />
        <ShowMeBody>
          <TileGrid>
            {TILES.map((art, i) => (
              <Tile key={i} $on={i === 6}><svg width="70" height="52" viewBox="0 0 210 156">{art}</svg></Tile>
            ))}
          </TileGrid>
          <HintBlock>
            <Hint $h={26}><span>For <b>horizontal bars</b> try</span></Hint>
            <Hint $h={35} $mt={3} $ls={0.45}><HintText $w={71}>0 or more</HintText><Pill $w={112} $bg="#4996b2">Dimensions</Pill></Hint>
            <Hint $h={35} $ls={0.15}><HintText $w={68}>1 or more</HintText><Pill $w={98} $bg="#00b180">Measures</Pill></Hint>
          </HintBlock>
        </ShowMeBody>
      </ShowMe>
    </Window>
  );
}
